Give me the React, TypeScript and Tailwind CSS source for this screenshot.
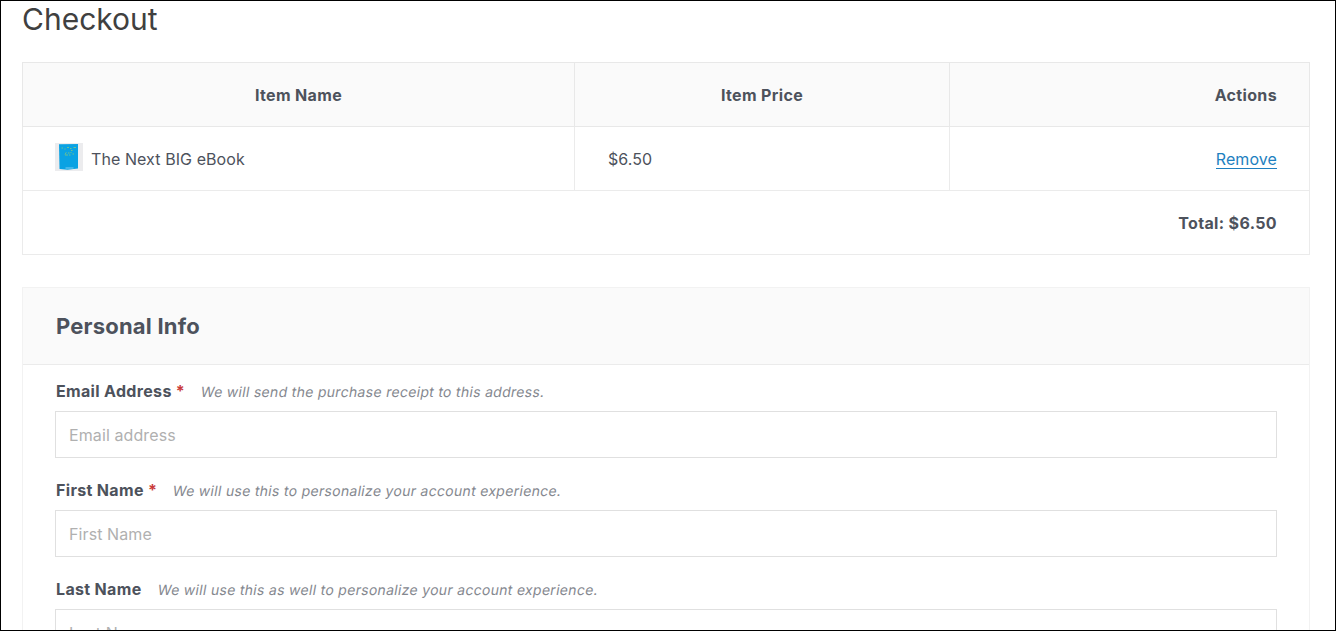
import React, { useState } from 'react';

interface CartItem {
    id: number;
    name: string;
    price: number;
}

interface FieldProps {
    id: string;
    label: string;
    description: string;
    placeholder: string;
    required?: boolean;
    type?: string;
}

const BookCover: React.FC = () => (
    <svg className="w-[28px] h-[28px] shrink-0 -mt-[3px]" viewBox="0 0 28 28" aria-hidden="true">
        <rect width="28" height="28" fill="#ececee" />
        <path d="M4 1.3L23 1V25.6L12.5 26.8L4.5 26Z" fill="#0aa2e3" />
        <path d="M6.5 5h1.5M9.5 6h1M12 4.5h2M15 5.5h1.5M16 7.5h1.5M18.5 4.5h2.5M10 11.5l1.3-2.2M13 10h1.5M15.5 9.6h1M10 12h3M14 12h1.5M17.5 11h1.5" stroke="#6fc08f" strokeWidth="1" fill="none" />
        <path d="M10.5 25h8" stroke="#7fcdf0" strokeWidth="1" />
    </svg>
);

const Field: React.FC<FieldProps> = ({ id, label, description, placeholder, required, type = 'text' }) => (
    <div className="h-[99px]">
        <div className="flex items-center h-[24px] pl-[1px] mb-[8px]">
            <label htmlFor={id} className="text-[16px] font-bold tracking-[0.33px] text-[#4d525c]">
                {label}
                {required && <span className="text-[#c93a3a]"> *</span>}
            </label>
            {/* skewed upright face, keeps the two-storey "a" */}
            <span className="ml-4 text-[14px] -skew-x-[10deg] tracking-[0.3px] text-[#85888f]">{description}</span>
        </div>
        <input
            id={id}
            name={id}
            type={type}
            placeholder={placeholder}
            className="block w-full h-[47px] px-[13px] border border-[#e0e0e0] bg-white text-[16px] tracking-[0.1px] text-[#4d525c] placeholder:text-[#b0b0b0] outline-none"
        />
    </div>
);

const App: React.FC = () => {
    const [items, setItems] = useState<CartItem[]>([{ id: 1, name: 'The Next BIG eBook', price: 6.5 }]);

    const total = items.reduce((sum, item) => sum + item.price, 0);

    const handleRemove = (id: number) => {
        setItems(items.filter((item) => item.id !== id));
    };

    return (
        <div className="w-full h-[631px] overflow-hidden border border-black bg-white font-['Inter',sans-serif] text-[#4d525c]">
            <div className="pl-[21px] pr-[25px]">
                <h1 className="h-[61px] text-[30px] leading-[37px] text-[#404040]">Checkout</h1>

                <table className="w-full table-fixed text-[16px] tracking-[0.08px] border border-[#ebebeb]">
                    <colgroup>
                        <col className="w-[552px]" />
                        <col className="w-[375px]" />
                        <col />
                    </colgroup>
                    <thead className="bg-[#fafafa] tracking-[0.35px]">
                        <tr className="h-[64px]">
                            <th className="border border-[#e8e8e8] font-bold">Item Name</th>
                            <th className="border border-[#e8e8e8] font-bold">Item Price</th>
                            <th className="border border-[#e8e8e8] font-bold text-right pr-[32px]">Actions</th>
                        </tr>
                    </thead>
                    <tbody>
                        {items.map((item) => (
                            <tr key={item.id} className="h-[64px]">
                                <td className="border border-[#ebebeb] pl-[32px]">
                                    <div className="flex items-center gap-[8px]">
                                        <BookCover />
                                        <span>{item.name}</span>
                                    </div>
                                </td>
                                <td className="border border-[#ebebeb] pl-[33px]">${item.price.toFixed(2)}</td>
                                <td className="border border-[#ebebeb] text-right pr-[32px]">
                                    <button
                                        type="button"
                                        onClick={() => handleRemove(item.id)}
                                        className="cursor-pointer tracking-[0.08px] leading-[17px] text-[#1e7fc0] border-b border-[#1e7fc0]"
                                    >
                                        Remove
                                    </button>
                                </td>
                            </tr>
                        ))}
                    </tbody>
                    <tfoot>
                        <tr className="h-[64px]">
                            <th colSpan={3} className="font-bold tracking-[0.35px] text-right pr-[32px]">
                                Total: ${total.toFixed(2)}
                            </th>
                        </tr>
                    </tfoot>
                </table>

                <form className="mt-[32px] border border-[#f2f2f2]">
                    <h2 className="flex items-center h-[77px] pl-[33px] pt-[1px] bg-[#fafafa] border-b border-[#ebebeb] text-[22px] font-bold tracking-[0.2px]">
                        Personal Info
                    </h2>
                    <div className="px-[32px] pt-[14px]">
                        <Field
                            id="email"
                            type="email"
                            label="Email Address"
                            description="We will send the purchase receipt to this address."
                            placeholder="Email address"
                            required
                        />
                        <Field
                            id="first-name"
                            label="First Name"
                            description="We will use this to personalize your account experience."
                            placeholder="First Name"
                            required
                        />
                        <Field
                            id="last-name"
                            label="Last Name"
                            description="We will use this as well to personalize your account experience."
                            placeholder="Last Name"
                        />
                    </div>
                </form>
            </div>
        </div>
    );
};

export default App;
